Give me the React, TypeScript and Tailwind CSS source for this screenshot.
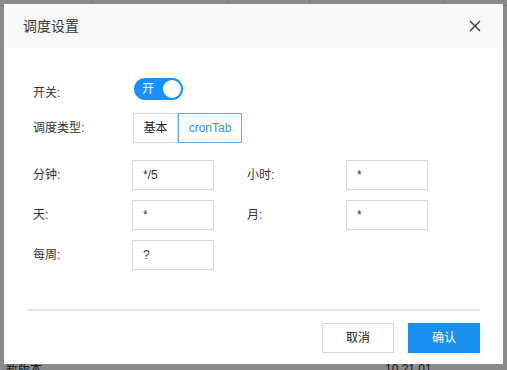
import React, { useState } from "react";

const font = { fontFamily: '"Liberation Sans", "Noto Sans CJK SC", sans-serif' };

function Field({ label, value }: { label: string; value: string }) {
  return (
    <div className="flex items-center">
      <div className="w-[99px] text-[12px] text-[#333]">{label}</div>
      <input
        defaultValue={value}
        className="w-[82px] h-[30px] border border-[#d9d9d9] px-[10px] text-[12px] text-[#333] outline-none"
      />
    </div>
  );
}

export default function App() {
  const [on, setOn] = useState(true);
  const [mode, setMode] = useState("cron");

  return (
    <div className="relative w-[507px] h-[370px] overflow-hidden bg-white" style={font}>
      {/* page behind the modal */}
      <div className="flex h-[24px] -mt-[18px] items-center text-[12px] text-[#333] border-b border-[#ddd]">
        <div className="w-[92px] pl-[40px] border-r border-[#ddd]">发布人：</div>
        <div className="w-[136px] pl-[12px] border-r border-[#ddd]">全部</div>
        <div className="w-[82px] pl-[26px] border-r border-[#ddd]">上传人：</div>
        <div className="w-[135px] pl-[12px] border-r border-[#ddd]">全部</div>
      </div>
      <div className="mt-[354px] flex text-[12px] text-[#333]">
        <div className="w-[385px] pl-[6px]">新版本</div>
        <div>10.21.01</div>
      </div>
      <div className="absolute inset-0 bg-black/[0.46]" />

      {/* modal */}
      <div className="absolute left-[4px] top-[4px] w-[499px] h-[360px] bg-white flex flex-col">
        <div className="h-[44px] bg-[#f9f9f9] flex items-center justify-between pl-[19px] pr-[22px]">
          <span className="text-[14px] text-[#333]">调度设置</span>
          <svg width="12" height="12" viewBox="0 0 12 12" className="text-[#333]">
            <path d="M1 1L11 11M11 1L1 11" stroke="currentColor" strokeWidth="1.3" />
          </svg>
        </div>

        <div className="flex-1 pl-[29px] pr-[23px]">
          <div className="flex items-center mt-[30px]">
            <div className="w-[101px] translate-y-[4px] text-[12px] text-[#333]">开关:</div>
            <button
              onClick={() => setOn(!on)}
              className={`w-[49px] h-[22px] rounded-full flex items-center justify-between px-[2px] ${on ? "bg-[#1890ff]" : "bg-[#ccc]"}`}
            >
              <span className="pl-[6px] text-[12px] text-white leading-none">开</span>
              <span className="w-[18px] h-[18px] rounded-full bg-white" />
            </button>
          </div>

          <div className="flex items-center mt-[13px]">
            <div className="w-[100px] text-[12px] text-[#333]">调度类型:</div>
            <div className="flex h-[30px]">
              <button
                onClick={() => setMode("basic")}
                className={`w-[45px] border text-[12px] ${mode === "basic" ? "border-[#1890ff] text-[#1890ff]" : "border-[#d9d9d9] text-[#222]"}`}
              >
                基本
              </button>
              <button
                onClick={() => setMode("cron")}
                className={`w-[64px] border text-[12px] ${mode === "cron" ? "border-[#5aaaf5] text-[#3a8ee8]" : "border-[#d9d9d9] text-[#222]"}`}
              >
                cronTab
              </button>
            </div>
          </div>

          <div className="grid grid-cols-[214px_auto] gap-y-[10px] mt-[17px]">
            <Field label="分钟:" value="*/5" />
            <Field label="小时:" value="*" />
            <Field label="天:" value="*" />
            <Field label="月:" value="*" />
            <Field label="每周:" value="?" />
          </div>

          <div className="h-[2px] bg-[#e6e6e6] mt-[39px] -ml-[5px]" />

          <div className="flex justify-end gap-[14px] mt-[12px]">
            <button className="w-[72px] h-[30px] border border-[#d9d9d9] text-[12px] text-[#222] bg-white">取消</button>
            <button className="w-[72px] h-[30px] bg-[#1890ef] text-[12px] text-white">确认</button>
          </div>
        </div>
      </div>
    </div>
  );
}
